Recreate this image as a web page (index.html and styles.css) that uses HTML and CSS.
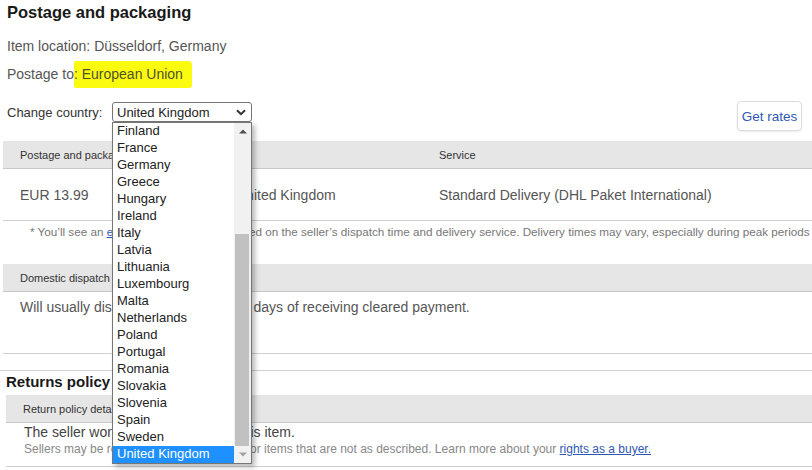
FILE: index.html
```html
<!DOCTYPE html>
<html lang="en">
<head>
<meta charset="utf-8">
<title>Postage and packaging</title>
<link rel="stylesheet" href="styles.css">
</head>
<body>
<div class="page">
  <h2 class="title">Postage and packaging</h2>
  <p class="info info-location">Item location: Düsseldorf, Germany</p>
  <p class="info info-dest">Postage to<span class="hl">: European Union</span></p>

  <div class="controls">
    <div class="country">
      <span class="country-label">Change country:</span>
      <div class="select-wrap">
        <div class="select">
          <span>United Kingdom</span>
          <svg class="chev" width="10" height="7" viewBox="0 0 10 7"><path d="M1 1.2 L5 5.2 L9 1.2" fill="none" stroke="#333" stroke-width="2"/></svg>
        </div>
        <div class="listbox">
          <ul class="options">
            <li>Finland</li>
            <li>France</li>
            <li>Germany</li>
            <li>Greece</li>
            <li>Hungary</li>
            <li>Ireland</li>
            <li>Italy</li>
            <li>Latvia</li>
            <li>Lithuania</li>
            <li>Luxembourg</li>
            <li>Malta</li>
            <li>Netherlands</li>
            <li>Poland</li>
            <li>Portugal</li>
            <li>Romania</li>
            <li>Slovakia</li>
            <li>Slovenia</li>
            <li>Spain</li>
            <li>Sweden</li>
            <li class="selected">United Kingdom</li>
          </ul>
          <div class="scrollbar">
            <div class="sb-btn"><svg width="8" height="5" viewBox="0 0 8 5"><path d="M0 4.5 L4 0.5 L8 4.5 Z" fill="#505050"/></svg></div>
            <div class="sb-space"></div>
            <div class="sb-thumb"></div>
            <div class="sb-btn"><svg width="8" height="5" viewBox="0 0 8 5"><path d="M0 0.5 L4 4.5 L8 0.5 Z" fill="#a3a3a3"/></svg></div>
          </div>
        </div>
      </div>
    </div>
    <button class="rates">Get rates</button>
  </div>

  <div class="table table-postage">
    <div class="thead cols3">
      <div class="cell">Postage and packaging</div>
      <div class="cell">To</div>
      <div class="cell">Service</div>
    </div>
    <div class="trow cols3">
      <div class="cell">EUR 13.99</div>
      <div class="cell">United Kingdom</div>
      <div class="cell">Standard Delivery (DHL Paket International)</div>
    </div>
  </div>
  <p class="footnote">* You’ll see an <a href="#" class="link">estimated delivery date</a> based on the seller’s dispatch time and delivery service. Delivery times may vary, especially during peak periods and depending on when your payment clears.</p>

  <div class="table table-dispatch">
    <div class="thead"><div class="cell">Domestic dispatch time</div></div>
    <div class="trow trow-tall"><div class="cell">Will usually dispatch within 3 working days of receiving cleared payment.</div></div>
  </div>

  <div class="returns">
    <h3 class="returns-title">Returns policy</h3>
    <div class="table">
      <div class="thead thead-returns"><div class="cell">Return policy details</div></div>
      <div class="returns-body">
        <p class="returns-main">The seller won’t accept returns for this item.</p>
        <p class="returns-note">Sellers may be required to accept returns for items that are not as described. Learn more about your <a href="#" class="link">rights as a buyer.</a></p>
      </div>
    </div>
  </div>
</div>
</body>
</html>
```

FILE: styles.css
```css
* { box-sizing: border-box; }
html, body { margin: 0; padding: 0; background: #fff; }
body {
  font-family: "Liberation Sans", Arial, sans-serif;
  color: #555;
  overflow: hidden;
  width: 812px;
  height: 470px;
}
.page { width: 812px; }
p { margin: 0; }
ul { margin: 0; padding: 0; list-style: none; }

.title {
  margin: 0;
  padding-left: 7px;
  font-size: 16.5px;
  font-weight: bold;
  line-height: 24px;
  color: #191919;
}
.info {
  padding-left: 7px;
  font-size: 14px;
  line-height: 20px;
  color: #555;
}
.info-location { margin-top: 12px; }
.info-dest { margin-top: 8px; }
.hl {
  background: #fbfb10;
  padding: 5px 9px 6px 0;
  border-radius: 2px 4px 3px 2px;
  color: #50502a;
}

.controls {
  margin-top: 17px;
  height: 30px;
  display: flex;
  justify-content: space-between;
  align-items: flex-start;
  padding: 0 10px 0 7px;
}
.country { display: flex; align-items: center; }
.country-label {
  width: 105px;
  font-size: 13px;
  line-height: 20px;
  padding-top: 2px;
  color: #333;
  white-space: nowrap;
}
.select-wrap { position: relative; }
.select {
  width: 140px;
  height: 20px;
  border: 1px solid #767676;
  border-radius: 3px;
  background: #fff;
  display: flex;
  align-items: center;
  justify-content: space-between;
  padding: 0 5px 0 4px;
  font-size: 13px;
  color: #222;
}
.chev { margin-top: 1px; }

.listbox {
  position: absolute;
  top: 20px;
  left: 0;
  width: 140px;
  height: 342px;
  border: 1px solid #767676;
  background: #fff;
  box-shadow: 3px 3px 5px rgba(0,0,0,0.28);
  display: flex;
  z-index: 10;
}
.options { flex: 1; }
.options li {
  height: 17px;
  line-height: 16px;
  padding-left: 4px;
  font-size: 13px;
  color: #222;
  white-space: nowrap;
}
.options li.selected { background: #1e90ff; color: #fff; }
.scrollbar {
  width: 17px;
  background: #f1f1f1;
  display: flex;
  flex-direction: column;
}
.sb-btn {
  height: 17px;
  display: flex;
  align-items: center;
  justify-content: center;
}
.sb-space { flex: 1; }
.sb-thumb {
  height: 212px;
  margin: 0 2px 0 1px;
  background: #c1c1c1;
}

.rates {
  width: 65px;
  height: 30px;
  border: 1px solid #dcdcdc;
  border-radius: 4px;
  background: #fff;
  box-shadow: 0 1px 2px rgba(0,0,0,0.08);
  font-family: "Liberation Sans", Arial, sans-serif;
  font-size: 13.5px;
  color: #2f58b3;
  padding: 0;
}

.table-postage { margin: 10px 0 0 3px; }
.thead {
  height: 28px;
  background: #e6e6e6;
  border-bottom: 1px solid #c8c8c8;
  font-size: 11px;
  color: #333;
  display: grid;
  align-items: center;
}
.cols3 { display: grid; grid-template-columns: 216px 203px 1fr; }
.cell { padding-left: 17px; white-space: nowrap; }
.trow {
  height: 52px;
  border-bottom: 1px solid #cfcfcf;
  font-size: 14px;
  color: #555;
  align-items: center;
}
.footnote {
  padding-left: 30px;
  font-size: 11.7px;
  line-height: 22px;
  color: #777;
  white-space: nowrap;
  overflow: hidden;
}
.link { color: #2f58b3; text-decoration: underline; }

.table-dispatch { margin: 21px 0 0 3px; }
.trow-tall {
  display: block;
  height: 62px;
  padding-top: 6px;
  line-height: 18px;
}

.returns {
  margin-top: 16px;
  border-top: 1px solid #d0d0d0;
  padding-left: 6px;
}
.returns-title {
  margin: 0;
  font-size: 15px;
  font-weight: bold;
  line-height: 20px;
  color: #191919;
  padding-top: 1px;
}
.thead-returns { margin-top: 3px; }
.returns-body {
  padding: 0 0 9px 18px;
  border-bottom: 1px solid #cfcfcf;
}
.returns-main { font-size: 14px; line-height: 18px; color: #444; }
.returns-note { font-size: 12px; line-height: 16px; color: #888; white-space: nowrap; }
```
